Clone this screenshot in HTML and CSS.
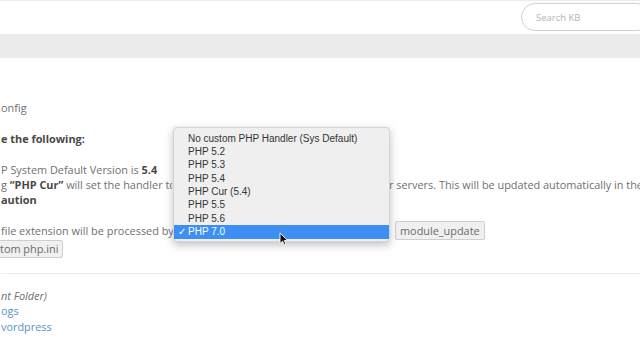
FILE: index.html
```html
<!DOCTYPE html>
<html>
<head>
<meta charset="utf-8">
<link rel="stylesheet" href="styles.css">
</head>
<body>
<header class="topbar">
  <div class="search"><span class="placeholder">Search KB</span></div>
</header>
<div class="band"></div>
<main class="content">
  <p class="line l-config">onfig</p>
  <p class="line bold l-note">e the following:</p>
  <p class="line l-sys">P System Default Version is <b>5.4</b></p>
  <div class="line l-cur"><span class="cur-a">g <b>“PHP Cur”</b> will set the handler to</span><span class="cur-b">r servers. This will be updated automatically in the</span></div>
  <p class="line bold l-caution">aution</p>
  <div class="row l-ext">
    <span class="ext-text">file extension will be processed by</span>
    <div class="select-wrap">
      <div class="select"><span class="arrows"><svg width="7" height="11" viewBox="0 0 7 11"><path d="M1 4.5 L3.5 2 L6 4.5 M1 6.5 L3.5 9 L6 6.5" fill="none" stroke="#fff" stroke-width="1.3"/></svg></span></div>
      <ul class="popup">
        <li>No custom PHP Handler (Sys Default)</li>
        <li>PHP 5.2</li>
        <li>PHP 5.3</li>
        <li>PHP 5.4</li>
        <li>PHP Cur (5.4)</li>
        <li>PHP 5.5</li>
        <li>PHP 5.6</li>
        <li class="sel"><span class="check">✓</span>PHP 7.0</li>
      </ul>
      <svg class="cursor" width="10" height="14" viewBox="0 0 10 14"><path d="M1 1 L1 11.5 L3.6 9.2 L5.4 13 L7 12.3 L5.3 8.6 L8.6 8.4 Z" fill="#111" stroke="#fff" stroke-width="0.9"/></svg>
    </div>
    <button class="btn">module_update</button>
  </div>
  <button class="btn btn-ini">tom php.ini</button>
  <hr class="rule">
  <p class="line ital l-folder">nt Folder)</p>
  <p class="line link">ogs</p>
  <p class="line link">vordpress</p>
</main>
</body>
</html>
```
FILE: styles.css
```css
html, body { margin: 0; padding: 0; background: #fff; overflow: hidden; }
body { width: 640px; height: 360px; font-family: "Open Sans", "Lato", sans-serif; color: #707070; font-size: 10.9px; }
.topbar { height: 34px; border-top: 1px solid #ececec; box-sizing: border-box; display: flex; justify-content: flex-end; align-items: flex-start; padding-top: 2px; }
.search { width: 130px; height: 28px; margin-right: -11px; border: 1px solid #c9d3d9; border-radius: 14px; box-sizing: border-box; display: flex; align-items: center; padding-left: 14px; }
.placeholder { font-family: "Open Sans", sans-serif; font-size: 9.5px; color: #b4b4b4; }
.band { height: 24px; background: #ececec; }
.content { padding: 0 0 0 1px; }
.line { margin: 0; white-space: nowrap; line-height: 15px; height: 15px; }
.bold, b { font-weight: 700; color: #484848; }
.l-config { margin-top: 42px; }
.l-note { margin-top: 16px; }
.l-sys { margin-top: 16px; }
.l-cur { display: flex; overflow: hidden; }
.cur-a { width: 171px; overflow: hidden; flex: none; }
.cur-b { margin-left: 217px; flex: none; }
.row { display: flex; align-items: center; margin-top: 14px; height: 19px; white-space: nowrap; }
.ext-text { width: 172px; overflow: hidden; flex: none; }
.select-wrap { position: relative; width: 217px; height: 18px; flex: none; }
.select { height: 18px; border: 1px solid #c6c6c6; border-radius: 4px; box-sizing: border-box; background: #fff; position: relative; }
.arrows { position: absolute; right: 0; top: 0; width: 10px; height: 16px; background: #3b8ef3; border-radius: 0 3px 3px 0; display: flex; align-items: center; justify-content: center; }
.popup { position: absolute; left: 0; bottom: -2px; width: 215px; margin: 0; padding: 3.5px 0 2px; list-style: none; background: #efefef; border: 1px solid #d4d4d4; border-radius: 4px; box-shadow: 0 3px 8px rgba(0,0,0,0.25); font-family: "Liberation Sans", "Helvetica", sans-serif; font-size: 10px; color: #333; }
.popup li { height: 13.3px; line-height: 13.3px; padding-left: 14px; position: relative; }
.popup li.sel { background: #3d8ff3; color: #fff; height: 13.6px; line-height: 13.6px; }
.check { position: absolute; left: 4px; font-size: 10px; }
.cursor { position: absolute; left: 106px; top: 10px; }
.btn { font-family: "Open Sans", "Lato", sans-serif; font-size: 10.9px; color: #6a6a6a; background: #f0f0f0; border: 1px solid #cfcfcf; border-radius: 2px; height: 19px; padding: 0 4px; margin: 0; line-height: 17px; }
.row .btn { margin-left: 5px; }
.btn-ini { display: block; margin-left: -6px; margin-top: 0; height: 18px; line-height: 16px; padding-left: 4px; }
.rule { border: 0; border-top: 1px solid #ececec; margin: 15px 0 0; }
.ital { font-style: italic; margin-top: 14px; }
.link { color: #5b8fc2; line-height: 15.5px; height: 15.5px; }
```
